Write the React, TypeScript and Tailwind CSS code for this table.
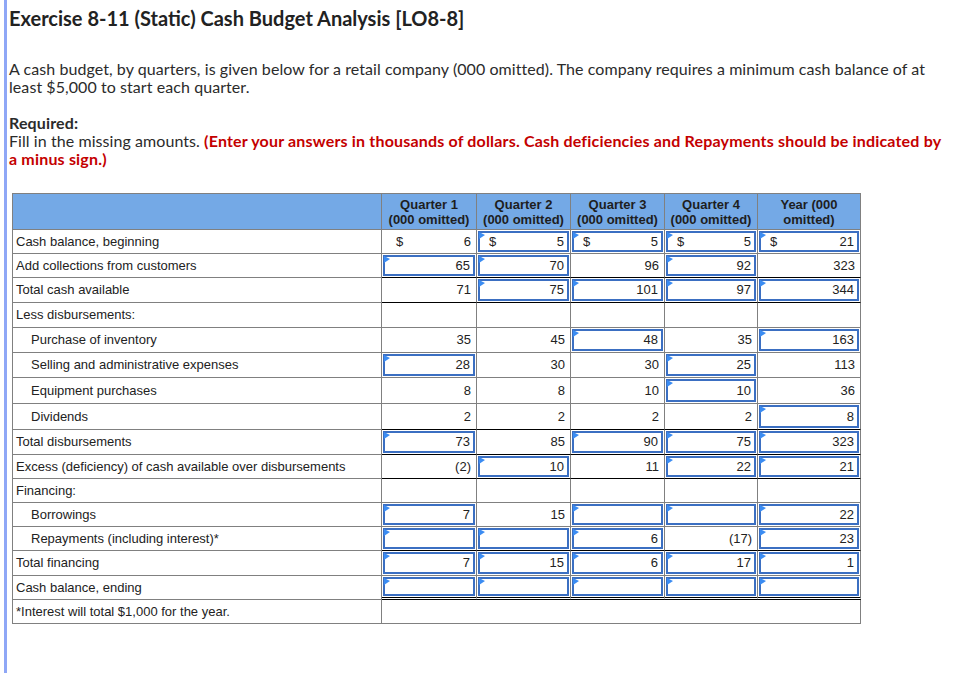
import React from "react";

type Row = {
  label: string;
  indent?: boolean;
  vals: string[];
  inp: string;
  h: number;
  bottom?: "gray" | "black" | "double";
  dollar?: boolean;
  merged?: boolean;
};

const rows: Row[] = [
  { label: "Cash balance, beginning", vals: ["6", "5", "5", "5", "21"], inp: "01111", h: 24, dollar: true },
  { label: "Add collections from customers", vals: ["65", "70", "96", "92", "323"], inp: "11010", h: 24, bottom: "black" },
  { label: "Total cash available", vals: ["71", "75", "101", "97", "344"], inp: "01111", h: 25, bottom: "black" },
  { label: "Less disbursements:", vals: ["", "", "", "", ""], inp: "00000", h: 25 },
  { label: "Purchase of inventory", indent: true, vals: ["35", "45", "48", "35", "163"], inp: "00101", h: 25 },
  { label: "Selling and administrative expenses", indent: true, vals: ["28", "30", "30", "25", "113"], inp: "10010", h: 25 },
  { label: "Equipment purchases", indent: true, vals: ["8", "8", "10", "10", "36"], inp: "00010", h: 26 },
  { label: "Dividends", indent: true, vals: ["2", "2", "2", "2", "8"], inp: "00001", h: 26, bottom: "black" },
  { label: "Total disbursements", vals: ["73", "85", "90", "75", "323"], inp: "10111", h: 25, bottom: "black" },
  { label: "Excess (deficiency) of cash available over disbursements", vals: ["(2)", "10", "11", "22", "21"], inp: "01011", h: 24, bottom: "black" },
  { label: "Financing:", vals: ["", "", "", "", ""], inp: "00000", h: 24 },
  { label: "Borrowings", indent: true, vals: ["7", "15", "", "", "22"], inp: "10111", h: 24 },
  { label: "Repayments (including interest)*", indent: true, vals: ["", "", "6", "(17)", "23"], inp: "11101", h: 24, bottom: "black" },
  { label: "Total financing", vals: ["7", "15", "6", "17", "1"], inp: "11111", h: 25 },
  { label: "Cash balance, ending", vals: ["", "", "", "", ""], inp: "11111", h: 24, bottom: "double" },
  { label: "*Interest will total $1,000 for the year.", vals: [], inp: "", h: 24, merged: true },
];

function Flag() {
  return (
    <svg
      className="absolute -left-px -top-px z-10"
      width="6"
      height="7"
      viewBox="0 0 6 7"
    >
      <polygon points="0,0 6,3 0,7" fill="#3b8cf2" />
    </svg>
  );
}

function DataCell({
  value,
  input,
  dollar,
  bottom,
  h,
}: {
  value: string;
  input: boolean;
  dollar?: boolean;
  bottom?: Row["bottom"];
  h: number;
}) {
  const bcls =
    bottom === "black"
      ? "border-b border-b-black"
      : bottom === "double"
      ? "border-b-[3px] border-double border-b-black"
      : "border-b border-b-[#808080]";
  return (
    <div className={`box-border border-r border-r-[#808080] ${bcls}`} style={{ height: h }}>
      {input ? (
        <div className="h-full p-[1px]">
          <div className="relative flex h-full items-center justify-between border-2 border-[#3b6fc2] pl-[9px] pr-[3px]">
            <Flag />
            <span>{dollar ? "$" : ""}</span>
            <span>{value}</span>
          </div>
        </div>
      ) : (
        <div className="flex h-full items-center justify-between pl-[14px] pr-[5px]">
          <span>{dollar ? "$" : ""}</span>
          <span>{value}</span>
        </div>
      )}
    </div>
  );
}

export default function App() {
  return (
    <div className="flex min-h-[673px] w-[962px] bg-white">
      <div className="ml-[4px] w-[3px] shrink-0 bg-[#8fa7f6]" />
      <div className="pl-[2px] pt-[6px]">
        <h1
          className="text-[20px] font-bold leading-[24px] text-[#222]"
          style={{ fontFamily: "Lato, 'Open Sans', sans-serif" }}
        >
          Exercise 8-11 (Static) Cash Budget Analysis [LO8-8]
        </h1>
        <div
          className="text-[16px] leading-[18px] tracking-[0.07px] text-[#2b2b2b]"
          style={{ fontFamily: "Lato, 'Open Sans', sans-serif" }}
        >
          <p className="mt-[30px]">
            A cash budget, by quarters, is given below for a retail company (000 omitted). The company requires a minimum cash balance of at
            <br />
            least $5,000 to start each quarter.
          </p>
          <p className="mt-[18px] font-bold tracking-[0.15px]">Required:</p>
          <p>
            Fill in the missing amounts.{" "}
            <span className="font-bold tracking-[0.18px] text-[#c40000]">
              (Enter your answers in thousands of dollars. Cash deficiencies and Repayments should be indicated by
              <br />a minus sign.)
            </span>
          </p>
        </div>

        <div
          className="ml-[3px] mt-[25px] grid w-[849px] grid-cols-[369px_95px_94px_94px_93px_103px] border-l border-t border-[#808080] text-[13px] text-[#222]"
          style={{ fontFamily: "'Liberation Sans', Arial, sans-serif" }}
        >
          <div className="h-[36px] border-b border-r border-[#808080] bg-[#74a9e6]" />
          {["Quarter 1", "Quarter 2", "Quarter 3", "Quarter 4"].map((q) => (
            <div
              key={q}
              className="flex h-[36px] flex-col items-center justify-center border-b border-r border-[#808080] bg-[#74a9e6] font-bold leading-[15px] text-[#1e1e1e]"
            >
              <span>{q}</span>
              <span>(000 omitted)</span>
            </div>
          ))}
          <div className="flex h-[36px] flex-col items-center justify-center border-b border-r border-[#808080] bg-[#74a9e6] font-bold leading-[15px] text-[#1e1e1e]">
            <span>Year (000</span>
            <span>omitted)</span>
          </div>

          {rows.map((r, i) => (
            <React.Fragment key={i}>
              <div
                className={`flex items-center border-b border-r border-[#808080] ${r.indent ? "pl-[18px]" : "pl-[3px]"}`}
                style={{ height: r.h }}
              >
                {r.label}
              </div>
              {r.merged ? (
                <div className="col-span-5 border-b border-r border-[#808080]" style={{ height: r.h }} />
              ) : (
                r.vals.map((v, j) => (
                  <DataCell
                    key={j}
                    value={v}
                    input={r.inp[j] === "1"}
                    dollar={r.dollar}
                    bottom={r.bottom}
                    h={r.h}
                  />
                ))
              )}
            </React.Fragment>
          ))}
        </div>
      </div>
    </div>
  );
}
